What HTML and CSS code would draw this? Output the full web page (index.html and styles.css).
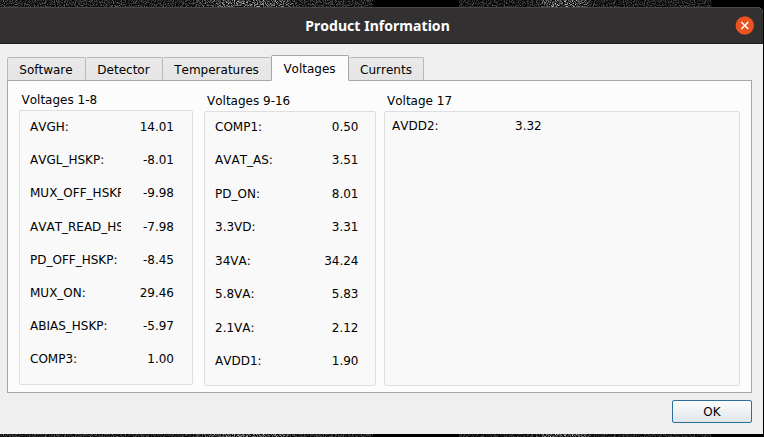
FILE: index.html
```html
<!DOCTYPE html>
<html lang="en">
<head>
<meta charset="utf-8">
<title>Product Information</title>
<link rel="stylesheet" href="styles.css">
</head>
<body>
<svg class="noise noise-top" width="764" height="7" aria-hidden="true">
  <defs>
    <filter id="grain" x="0" y="0" width="100%" height="100%" color-interpolation-filters="sRGB">
      <feTurbulence type="fractalNoise" baseFrequency="0.9" numOctaves="2" seed="4"/>
      <feColorMatrix values="2.6 0 0 0 -1  2.6 0 0 0 -1  2.6 0 0 0 -1  0 0 0 0 1"/>
    </filter>
    <linearGradient id="glow">
      <stop offset="0" stop-color="#666"/>
      <stop offset=".25" stop-color="#666"/>
      <stop offset=".31" stop-color="#ccc"/>
      <stop offset=".37" stop-color="#bbb"/>
      <stop offset=".39" stop-color="#666"/>
      <stop offset=".488" stop-color="#666"/>
      <stop offset=".489" stop-color="#000"/>
      <stop offset=".6" stop-color="#000"/>
      <stop offset=".601" stop-color="#555"/>
      <stop offset=".7" stop-color="#555"/>
      <stop offset=".72" stop-color="#ccc"/>
      <stop offset=".76" stop-color="#bbb"/>
      <stop offset=".78" stop-color="#555"/>
      <stop offset=".93" stop-color="#555"/>
      <stop offset=".932" stop-color="#000"/>
    </linearGradient>
    <mask id="fade"><rect width="764" height="7" fill="url(#glow)"/></mask>
  </defs>
  <g mask="url(#fade)"><rect width="764" height="7" filter="url(#grain)"/></g>
</svg>
<main class="window">
  <header class="titlebar">
    <h1>Product Information</h1>
    <button class="close" aria-label="Close"><svg width="19" height="19" viewBox="0 0 19 19"><circle cx="9.8" cy="9.5" r="9.2" fill="#e95420"/><path d="M6.3 6l7 7M13.3 6l-7 7" stroke="#fff" stroke-width="1.5"/></svg></button>
  </header>
  <nav class="tabs">
    <span class="tab software">Software</span>
    <span class="tab detector">Detector</span>
    <span class="tab temperatures">Temperatures</span>
    <span class="tab voltages active">Voltages</span>
    <span class="tab currents">Currents</span>
  </nav>
  <section class="pane">
    <div class="group first">
      <h2>Voltages 1-8</h2>
      <dl>
        <div><dt>AVGH:</dt><dd>14.01</dd></div>
        <div><dt>AVGL_HSKP:</dt><dd>-8.01</dd></div>
        <div><dt>MUX_OFF_HSKP:</dt><dd>-9.98</dd></div>
        <div><dt>AVAT_READ_HSKP:</dt><dd>-7.98</dd></div>
        <div><dt>PD_OFF_HSKP:</dt><dd>-8.45</dd></div>
        <div><dt>MUX_ON:</dt><dd>29.46</dd></div>
        <div><dt>ABIAS_HSKP:</dt><dd>-5.97</dd></div>
        <div><dt>COMP3:</dt><dd>1.00</dd></div>
      </dl>
    </div>
    <div class="group second">
      <h2>Voltages 9-16</h2>
      <dl>
        <div><dt>COMP1:</dt><dd>0.50</dd></div>
        <div><dt>AVAT_AS:</dt><dd>3.51</dd></div>
        <div><dt>PD_ON:</dt><dd>8.01</dd></div>
        <div><dt>3.3VD:</dt><dd>3.31</dd></div>
        <div><dt>34VA:</dt><dd>34.24</dd></div>
        <div><dt>5.8VA:</dt><dd>5.83</dd></div>
        <div><dt>2.1VA:</dt><dd>2.12</dd></div>
        <div><dt>AVDD1:</dt><dd>1.90</dd></div>
      </dl>
    </div>
    <div class="group third">
      <h2>Voltage 17</h2>
      <dl>
        <div><dt>AVDD2:</dt><dd>3.32</dd></div>
      </dl>
    </div>
  </section>
  <footer><button class="ok">OK</button></footer>
</main>
<svg class="noise" width="764" height="3" aria-hidden="true">
  <g mask="url(#fade)"><rect width="764" height="3" filter="url(#grain)"/></g>
</svg>
</body>
</html>
```
FILE: styles.css
```css
* { box-sizing: border-box; }
body {
  margin: 0;
  height: 437px;
  overflow: hidden;
  background: #000;
  color: #000;
  font: 12px/16px "DejaVu Sans", sans-serif;
  font-kerning: none;
}
h1, h2, dl, dd { margin: 0; font-size: inherit; font-weight: normal; }
.noise { display: block; }
.window {
  display: flex;
  flex-direction: column;
  width: 763px;
  height: 427px;
  background: #efefef;
  border-radius: 0 6px 0 0;
  overflow: hidden;
}
.titlebar {
  display: grid;
  grid-template-columns: 1fr auto 1fr;
  align-items: center;
  flex: none;
  height: 37px;
  padding: 0 9px 0 0;
  background: #323030;
  border-top: 1px solid #484646;
  border-bottom: 1px solid #1c1b1b;
}
.titlebar h1 {
  grid-column: 2;
  margin-left: 1px;
  font: bold 14px/18px "Noto Sans", sans-serif;
  font-kerning: none;
  letter-spacing: .05px;
  color: #fff;
}
.close {
  justify-self: end;
  width: 19px;
  height: 19px;
  margin-bottom: 1px;
  padding: 0;
  border: 0;
  background: none;
}
.close svg { display: block; }
.tabs {
  display: flex;
  align-items: flex-end;
  flex: none;
  height: 37px;
  padding-left: 7px;
  background: linear-gradient(#a6a6a6, #a6a6a6) 7px 100% / 745px 1px no-repeat;
}
.tab {
  height: 24px;
  padding: 4px 1px 0 0;
  text-align: center;
  background: linear-gradient(#e9e9e9, #e5e5e5);
  border: 1px solid #b9b9b9;
  border-left-width: 0;
  border-bottom-color: #a6a6a6;
  border-radius: 2px 2px 0 0;
}
.software { width: 79px; border-left-width: 1px; }
.detector { width: 77px; }
.temperatures { width: 108px; border-right-width: 0; }
.voltages { width: 78px; }
.currents { width: 75px; padding-right: 0; }
.tab.active {
  height: 26px;
  padding-top: 5px;
  background: #fcfcfc;
  border: 1px solid #a6a6a6;
  border-bottom-color: #fcfcfc;
}
.pane {
  display: flex;
  flex: none;
  width: 745px;
  height: 312px;
  margin-left: 7px;
  padding: 11px;
  background: #fcfcfc;
  border: 1px solid #a6a6a6;
  border-top: 0;
}
.group h2 { padding-left: 3px; height: 18px; white-space: nowrap; }
.group dl {
  height: 275px;
  background: #f9f9f9;
  border: 1px solid #dedede;
  border-radius: 2px;
}
.group dl div { display: flex; justify-content: space-between; height: 33.2px; }
.group dt { overflow: hidden; white-space: nowrap; }
.first { width: 174px; }
.first h2 { padding-left: 2.5px; }
.first dl { padding: 8px 18px 0 10px; }
.first dt { width: 91px; }
.second { width: 172px; margin: 1px 0 0 11px; }
.second dl { padding: 7px 16.5px 0 10px; }
.second dl div { height: 33.45px; }
.third { width: 356px; margin: 1px 0 0 8px; }
.third dl { padding: 6px 0 0 7px; }
.third dl div { justify-content: flex-start; }
.third dt { width: 123px; }
footer { display: flex; justify-content: flex-end; padding: 7px 11px 0 0; }
.ok {
  width: 80px;
  height: 23px;
  padding: 0;
  font: inherit;
  color: #000;
  background: linear-gradient(#fdfdfd, #dfe5e9);
  border: 1px solid #2b709c;
  border-radius: 2px;
}
```
